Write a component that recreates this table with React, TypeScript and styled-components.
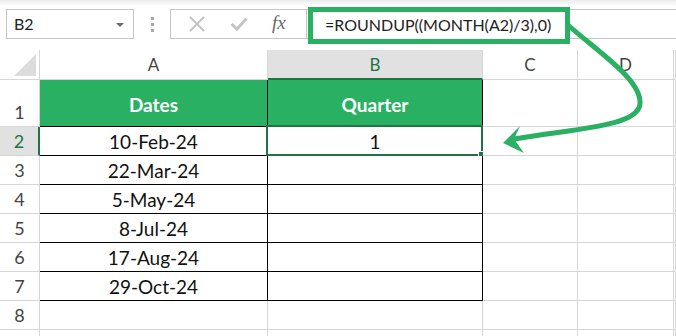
import React from 'react';
import styled, { createGlobalStyle } from 'styled-components';

const GlobalStyle = createGlobalStyle`
  html, body {
    margin: 0;
    padding: 0;
    background: #fff;
    font-family: Lato, "Open Sans", sans-serif;
  }
`;

const GREEN = '#29b062';
const DARK_GREEN = '#217346';
const GRID = '#d6d6d6';

const dates = ['10-Feb-24', '22-Mar-24', '5-May-24', '8-Jul-24', '17-Aug-24', '29-Oct-24'];
const columns = ['A', 'B', 'C', 'D', ''];

const App = () => {
  return (
    <Page>
      <GlobalStyle />
      <FormulaBar>
        <NameBox>
          B2
          <DropArrow />
        </NameBox>
        <Grip>
          <span />
          <span />
          <span />
        </Grip>
        <Buttons>
          <svg width="16" height="16" viewBox="0 0 16 16">
            <path d="M1 1 L15 15 M15 1 L1 15" stroke="#c4c4c4" strokeWidth="2" fill="none" />
          </svg>
          <svg width="18" height="14" viewBox="0 0 18 14">
            <path d="M1.5 7 L7 12 L16.5 1.5" stroke="#c4c4c4" strokeWidth="3" fill="none" />
          </svg>
          <Fx>fx</Fx>
        </Buttons>
        <FormulaInput>
          <Highlight>=ROUNDUP((MONTH(A2)/3),0)</Highlight>
        </FormulaInput>
      </FormulaBar>

      <Sheet>
        <Corner>
          <svg width="22" height="22" viewBox="0 0 22 22">
            <polygon points="22,0 22,22 0,22" fill="#dcdcdc" />
          </svg>
        </Corner>
        {columns.map((c, i) => (
          <ColHead key={i} $active={c === 'B'}>
            {c}
          </ColHead>
        ))}

        {Array.from({ length: 9 }, (_, r) => {
          const row = r + 1;
          return (
            <React.Fragment key={row}>
              {/* row 9 is cut by the window edge, so its number is never seen */}
              <RowHead $active={row === 2}>{row < 9 ? row : ''}</RowHead>
              {row === 1 ? (
                <>
                  <HeadCell>Dates</HeadCell>
                  <HeadCell>Quarter</HeadCell>
                </>
              ) : row <= 7 ? (
                <>
                  <DataCell>{dates[row - 2]}</DataCell>
                  <DataCell>
                    {row === 2 && (
                      <>
                        1
                        <Selection>
                          <Handle />
                        </Selection>
                      </>
                    )}
                  </DataCell>
                </>
              ) : (
                <>
                  <Cell />
                  <Cell />
                </>
              )}
              <Cell />
              <Cell />
              <Cell />
            </React.Fragment>
          );
        })}
      </Sheet>

      <Arrow width="676" height="336" viewBox="0 0 676 336">
        <path
          d="M568 25 C598 52 642 80 640 104 C638 126 580 128 514 139"
          stroke={GREEN}
          strokeWidth="5"
          fill="none"
        />
        <polygon points="503,143 520,126 514,139 524,153" fill={GREEN} />
      </Arrow>
    </Page>
  );
};

export default App;

const Page = styled.div`
  position: relative;
  width: 676px;
  height: 336px;
  overflow: hidden;
  background: linear-gradient(#ebebeb 0, #fff 6px);
`;

const FormulaBar = styled.div`
  display: flex;
  align-items: center;
  height: 30px;
  margin-top: 9px;
  padding-left: 6px;
  margin-bottom: 11px;
`;

const NameBox = styled.div`
  position: relative;
  box-sizing: border-box;
  width: 128px;
  height: 30px;
  border: 1px solid #c6c6c6;
  background: #fff;
  padding-left: 7px;
  font-size: 16px;
  line-height: 28px;
  color: #222;
`;

const DropArrow = styled.span`
  position: absolute;
  right: 9px;
  top: 13px;
  border-left: 4px solid transparent;
  border-right: 4px solid transparent;
  border-top: 4px solid #6b6b6b;
`;

const Grip = styled.div`
  display: flex;
  flex-direction: column;
  gap: 3px;
  margin: 0 16px 0 17px;

  span {
    width: 3px;
    height: 3px;
    background: #a6a6a6;
  }
`;

const Buttons = styled.div`
  box-sizing: border-box;
  width: 137px;
  height: 30px;
  border: 1px solid #c6c6c6;
  background: #fff;
  display: flex;
  align-items: center;
  justify-content: space-around;
  padding: 0 8px 0 6px;
`;

const Fx = styled.span`
  font-family: "Liberation Serif", serif;
  font-style: italic;
  font-size: 19px;
  color: #666;
  margin-top: -2px;
`;

const FormulaInput = styled.div`
  position: relative;
  flex: 1;
  box-sizing: border-box;
  height: 30px;
  border-top: 1px solid #c6c6c6;
  border-bottom: 1px solid #c6c6c6;
  background: #fff;
`;

const Highlight = styled.div`
  position: absolute;
  left: 1px;
  top: -3px;
  box-sizing: border-box;
  width: 262px;
  height: 37px;
  border: 5px solid ${GREEN};
  background: #fff;
  padding-left: 12px;
  font-size: 16px;
  line-height: 26px;
  color: #222;
  white-space: nowrap;
`;

const Sheet = styled.div`
  display: grid;
  grid-template-columns: 40px 228px 215px 95px 96px 1fr;
  grid-template-rows: 30px 47px repeat(8, 29px);
`;

const Cell = styled.div`
  position: relative;
  box-sizing: border-box;
  border-right: 1px solid ${GRID};
  border-bottom: 1px solid ${GRID};
  background: #fff;
`;

const Corner = styled(Cell)`
  display: flex;
  align-items: flex-end;
  justify-content: flex-end;
  padding: 0 3px 3px 0;
`;

const ColHead = styled(Cell)<{ $active?: boolean }>`
  display: flex;
  align-items: center;
  justify-content: center;
  font-size: 17px;
  color: ${(p) => (p.$active ? DARK_GREEN : '#444')};
  background: ${(p) => (p.$active ? '#e1e1e1' : '#fff')};
  border-bottom: ${(p) => (p.$active ? `2px solid ${DARK_GREEN}` : `1px solid ${GRID}`)};
`;

const RowHead = styled(Cell)<{ $active?: boolean }>`
  display: flex;
  align-items: flex-end;
  justify-content: center;
  padding-bottom: 3px;
  font-size: 18px;
  color: ${(p) => (p.$active ? DARK_GREEN : '#444')};
  background: ${(p) => (p.$active ? '#e1e1e1' : '#fff')};
  border-right: ${(p) => (p.$active ? `2px solid ${DARK_GREEN}` : `1px solid ${GRID}`)};
`;

const HeadCell = styled(Cell)`
  display: flex;
  align-items: center;
  justify-content: center;
  background: ${GREEN};
  color: #fff;
  font-weight: 700;
  font-size: 19px;
  border-right: 1px solid #000;
  border-bottom: 1px solid #000;
  padding-top: 2px;
`;

const DataCell = styled(Cell)`
  display: flex;
  align-items: center;
  justify-content: center;
  font-size: 19px;
  color: #111;
  border-right: 1px solid #000;
  border-bottom: 1px solid #000;
`;

const Selection = styled.div`
  position: absolute;
  left: -2px;
  top: -2px;
  right: -1px;
  bottom: -1px;
  border: 2px solid ${DARK_GREEN};
  pointer-events: none;
`;

const Handle = styled.div`
  position: absolute;
  right: -5px;
  bottom: -5px;
  width: 6px;
  height: 6px;
  background: ${DARK_GREEN};
  border: 1px solid #fff;
`;

const Arrow = styled.svg`
  position: absolute;
  left: 0;
  top: 0;
  pointer-events: none;
`;
